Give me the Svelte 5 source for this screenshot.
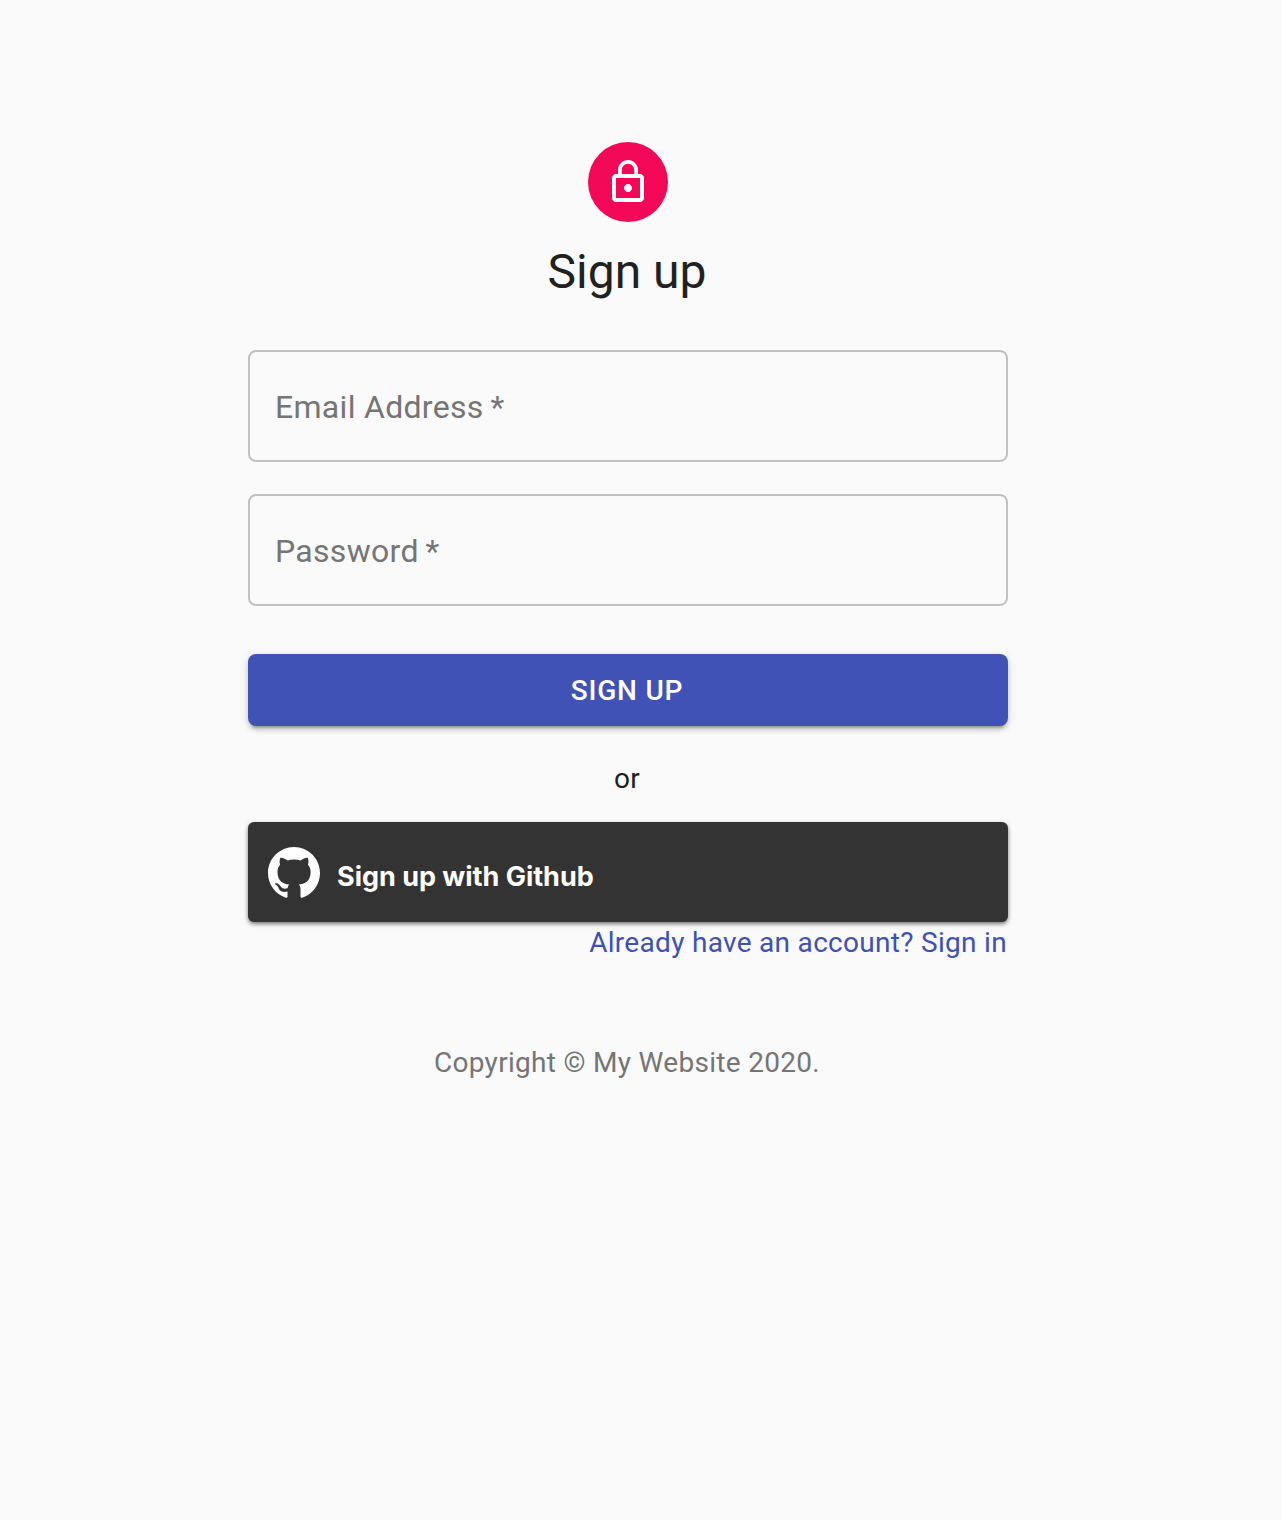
<script>
  const fields = ['Email Address', 'Password'];
</script>

<main>
  <div class="avatar">
    <svg viewBox="0 0 24 24" width="48" height="48" fill="#fff"><path d="M12 17c1.1 0 2-.9 2-2s-.9-2-2-2-2 .9-2 2 .9 2 2 2zm6-9h-1V6c0-2.76-2.24-5-5-5S7 3.240 7 6v2H6c-1.100 0-2 .9-2 2v10c0 1.100.9 2 2 2h12c1.100 0 2-.9 2-2V10c0-1.100-.9-2-2-2zM8.900 6c0-1.710 1.390-3.100 3.100-3.100s3.100 1.390 3.100 3.100v2H8.900V6zM18 20H6V10h12v10z"/></svg>
  </div>
  <h1>Sign up</h1>
  <form>
    {#each fields as label}
      <div class="field"><span>{label}&thinsp;*</span></div>
    {/each}
    <button type="button" class="primary">SIGN UP</button>
    <p class="or">or</p>
    <button type="button" class="github">
      <svg viewBox="0 0 16 16" width="52" height="52" fill="#fff"><path d="M8 0C3.580 0 0 3.580 0 8c0 3.540 2.290 6.530 5.470 7.590.4.070.55-.17.55-.38 0-.19-.01-.82-.01-1.490-2.010.37-2.530-.49-2.690-.94-.09-.23-.48-.94-.82-1.130-.28-.15-.68-.52-.01-.53.63-.01 1.080.58 1.230.82.72 1.210 1.870.87 2.330.66.07-.52.28-.87.51-1.070-1.780-.2-3.640-.89-3.640-3.950 0-.87.31-1.590.82-2.150-.08-.2-.36-1.020.08-2.120 0 0 .67-.21 2.200.82.64-.18 1.320-.27 2-.27s1.360.09 2 .27c1.530-1.040 2.200-.82 2.200-.82.44 1.100.16 1.920.08 2.120.51.56.82 1.270.82 2.150 0 3.070-1.870 3.750-3.650 3.950.29.25.54.73.54 1.480 0 1.070-.01 1.930-.01 2.200 0 .21.15.46.55.38A8.010 8.010 0 0 0 16 8c0-4.420-3.580-8-8-8z"/></svg>
      <span>Sign up with Github</span>
    </button>
    <div class="signin"><a href="#signin">Already have an account? Sign in</a></div>
  </form>
  <footer>Copyright © My Website 2020.</footer>
</main>

<style>
  :global(body) { background: #fafafa; }
  main {
    width: 760px;
    margin-left: 248px;
    padding-top: 142px;
    min-height: 1520px;
    box-sizing: border-box;
    display: flex;
    flex-direction: column;
    align-items: center;
    font-family: Roboto, sans-serif;
    color: #212121;
  }
  .avatar {
    width: 80px;
    height: 80px;
    border-radius: 50%;
    background: #f30757;
    display: flex;
    align-items: center;
    justify-content: center;
  }
  h1 { margin: 18px 2px 0 0; font-size: 48px; line-height: 64px; font-weight: 400; }
  form { width: 100%; margin-top: 46px; }
  .field {
    height: 112px;
    box-sizing: border-box;
    border: 2px solid #c1c1c1;
    border-radius: 8px;
    margin-bottom: 32px;
    padding: 2px 25px 0;
    display: flex;
    align-items: center;
    font-size: 32px;
    letter-spacing: 0.3px;
    color: #757575;
  }
  button {
    width: 100%;
    border: 0;
    color: #fff;
    display: flex;
    align-items: center;
    font-family: Roboto, sans-serif;
  }
  .primary {
    height: 72px;
    margin-top: 48px;
    padding: 0 2px 0 0;
    justify-content: center;
    background: #4052b5;
    border-radius: 8px;
    font-size: 28px;
    font-weight: 500;
    letter-spacing: 0.8px;
    box-shadow: 0 6px 2px -4px #0003, 0 4px 4px #0002, 0 2px 10px #0002;
  }
  .or { margin: 33px 2px 23px 0; text-align: center; font-size: 28px; line-height: 40px; letter-spacing: .3px; }
  .github {
    height: 100px;
    padding: 1px 20px 0;
    gap: 17px;
    background: #333;
    border-radius: 6px;
    box-shadow: 0 2px 4px #0008;
    font-family: Inter, sans-serif;
    font-size: 27px;
    font-weight: 700;
    letter-spacing: -.02px;
  }
  .github svg { margin-top: 1px; }
  .github span { padding-top: 7px; }
  .signin { padding: 1px 1px 0 0; text-align: right; line-height: 40px; font-size: 28px; letter-spacing: .3px; }
  a { color: #3f51b5; text-decoration: none; }
  footer { margin: 80px 2px 0 0; font-size: 28px; line-height: 40px; letter-spacing: .3px; color: #757575; }
</style>
